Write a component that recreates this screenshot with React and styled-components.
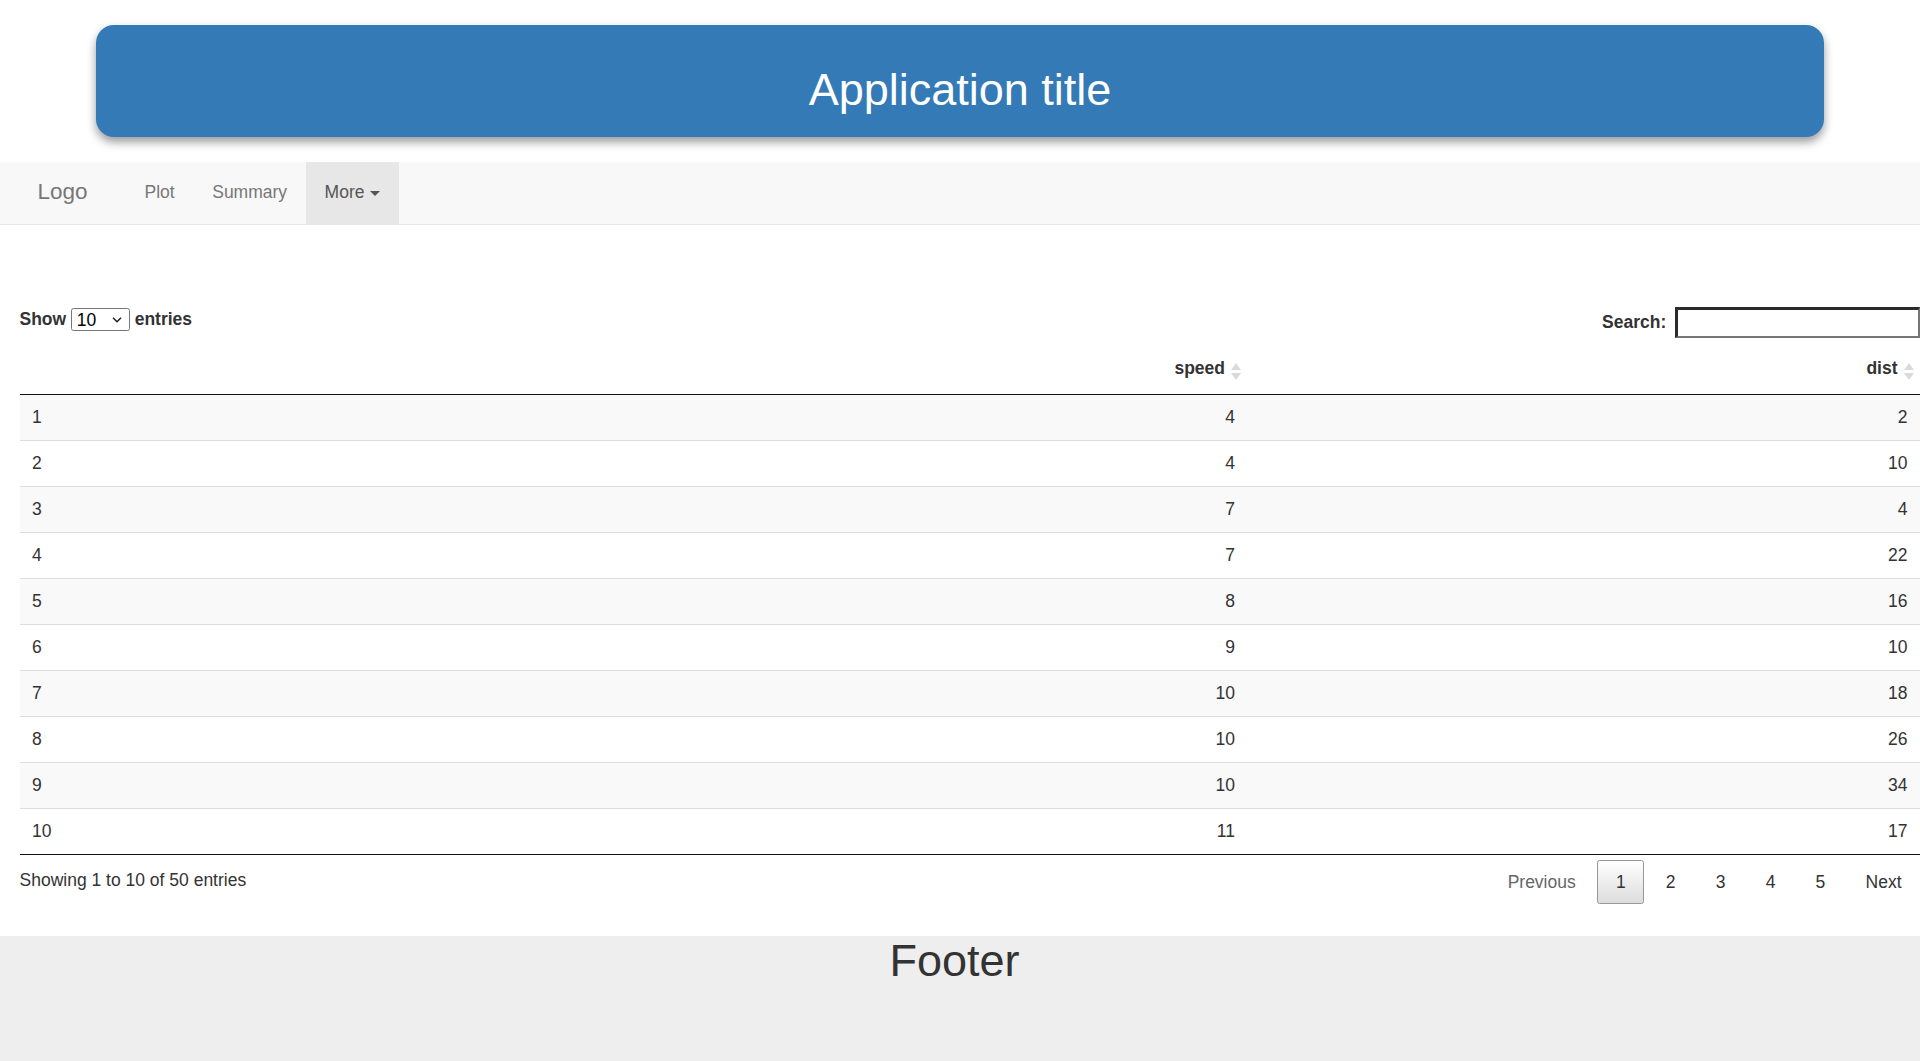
import React from 'react';
import styled, { createGlobalStyle } from 'styled-components';

const GlobalStyle = createGlobalStyle`
  html, body {
    margin: 0;
    padding: 0;
    background: #fff;
    overflow: hidden;
  }
  body {
    font-family: "Liberation Sans", Arial, Helvetica, sans-serif;
    font-size: 17.5px;
    line-height: 25px;
    color: #333;
  }
  * { box-sizing: border-box; }
`;

const FONT = `"Liberation Sans", Arial, Helvetica, sans-serif`;

const Page = styled.div`
  display: flex;
  flex-direction: column;
  min-height: 1061px;
`;

const TitleWrap = styled.header`
  padding: 25px 5% 0;
`;

const TitlePanel = styled.div`
  height: 112px;
  padding-top: 39.5px;
  background: #337ab7;
  border-radius: 18px;
  box-shadow: 0 5px 10px rgba(0, 0, 0, 0.4);
  text-align: center;
`;

const Title = styled.h1`
  margin: 0;
  font-family: ${FONT};
  font-size: 45px;
  line-height: 49.5px;
  font-weight: 400;
  color: #fff;
`;

const Navbar = styled.nav`
  display: flex;
  align-items: stretch;
  height: 63.5px;
  margin-top: 24.6px;
  padding-left: 18.75px;
  background: #f8f8f8;
  border-bottom: 1px solid #e7e7e7;
`;

const Brand = styled.a`
  display: block;
  padding: 17.75px 18.75px 19.75px;
  font-size: 22.5px;
  line-height: 25px;
  color: #777;
  text-decoration: none;
`;

const NavList = styled.ul`
  display: flex;
  margin: 0 0 0 19.5px;
  padding: 0;
  list-style: none;
`;

const NavLink = styled.a`
  display: block;
  padding: 18.75px;
  font-size: 17.5px;
  line-height: 25px;
  color: ${(p) => (p.$active ? '#555' : '#777')};
  background: ${(p) => (p.$active ? '#e7e7e7' : 'transparent')};
  text-decoration: none;
`;

const Caret = styled.span`
  display: inline-block;
  width: 0;
  height: 0;
  margin-left: 6px;
  vertical-align: middle;
  border-top: 5px solid #555;
  border-left: 5px solid transparent;
  border-right: 5px solid transparent;
`;

const Content = styled.main`
  padding: 82px 0 0 19.5px;
`;

const Controls = styled.div`
  display: flex;
  justify-content: space-between;
  align-items: flex-start;
  margin-bottom: 6.3px;
`;

const LengthLabel = styled.label`
  display: flex;
  align-items: center;
  height: 23px;
  margin-top: 1px;
  font-weight: 700;
  line-height: 23px;
`;

const SelectBox = styled.span`
  position: relative;
  display: inline-flex;
  width: 59px;
  height: 23px;
  margin: 0 5px 0 4.5px;
`;

const Select = styled.select`
  appearance: none;
  width: 100%;
  height: 100%;
  padding: 0 0 0 5px;
  border: 1px solid #767676;
  border-radius: 2.5px;
  background: #fff;
  font-family: ${FONT};
  font-size: 17.5px;
  font-weight: 400;
  color: #000;
`;

const Chevron = styled.svg`
  position: absolute;
  right: 8px;
  top: 50%;
  transform: translateY(-50%);
  pointer-events: none;
`;

const SearchLabel = styled.label`
  display: flex;
  align-items: center;
  font-weight: 700;
`;

const SearchInput = styled.input`
  width: 245px;
  height: 30.6px;
  margin-left: 8.75px;
  padding: 0 4px;
  border-style: solid;
  border-width: 3px 2px 2px 3px;
  border-color: #2b2b2b #767676 #767676 #2b2b2b;
  font-family: ${FONT};
  font-size: 17.5px;
  background: #fff;
`;

const Table = styled.table`
  width: 100%;
  table-layout: fixed;
  border-collapse: separate;
  border-spacing: 0;
  border-bottom: 1px solid #111;
`;

const Th = styled.th`
  position: relative;
  width: ${(p) => p.$w}px;
  padding: 12.5px 22.5px 12.5px 12.5px;
  font-weight: 700;
  line-height: 25px;
  text-align: ${(p) => (p.$left ? 'left' : 'right')};
  border-bottom: 1px solid #111;
`;

const SortIcon = styled.svg`
  position: absolute;
  right: 6.5px;
  top: 18.5px;
`;

const Tr = styled.tr`
  background: ${(p) => (p.$odd ? '#f9f9f9' : '#fff')};
  &:first-child td {
    border-top: none;
  }
`;

const Td = styled.td`
  padding: 10px 12.5px;
  line-height: 25px;
  color: #333;
  text-align: ${(p) => (p.$left ? 'left' : 'right')};
  border-top: 1px solid #ddd;
`;

const BottomRow = styled.div`
  display: flex;
  justify-content: space-between;
  align-items: flex-start;
`;

const Info = styled.div`
  padding-top: 13.2px;
  color: #333;
`;

const Pager = styled.div`
  display: flex;
  padding-top: 5px;
`;

const PageButton = styled.a`
  display: inline-block;
  min-width: 26.25px;
  margin-left: 3.2px;
  padding: 8.75px 17.5px;
  line-height: 25px;
  text-align: center;
  border: 1px solid ${(p) => (p.$current ? '#979797' : 'transparent')};
  border-radius: 2.5px;
  background: ${(p) =>
    p.$current ? 'linear-gradient(to bottom, #fff 0%, #dcdcdc 100%)' : 'transparent'};
  color: ${(p) => (p.$disabled ? '#666' : '#333')};
  text-decoration: none;
  cursor: default;
`;

const Footer = styled.footer`
  flex: 1;
  margin-top: 31.2px;
  padding-right: 11px;
  background: #eee;
  text-align: center;
`;

const FooterTitle = styled.h1`
  margin: 0;
  font-family: ${FONT};
  font-size: 45px;
  line-height: 49.5px;
  font-weight: 400;
  color: #333;
`;

const rows = [
  [1, 4, 2],
  [2, 4, 10],
  [3, 7, 4],
  [4, 7, 22],
  [5, 8, 16],
  [6, 9, 10],
  [7, 10, 18],
  [8, 10, 26],
  [9, 10, 34],
  [10, 11, 17],
];

const Sort = () => (
  <SortIcon width="10" height="19" viewBox="0 0 10 19">
    <polygon points="0,8 5,1 10,8" fill="#dadada" />
    <polygon points="0,11 10,11 5,18" fill="#dadada" />
  </SortIcon>
);

export default function App() {
  return (
    <Page>
      <GlobalStyle />
      <TitleWrap>
        <TitlePanel>
          <Title>Application title</Title>
        </TitlePanel>
      </TitleWrap>

      <Navbar>
        <Brand>Logo</Brand>
        <NavList>
          <li><NavLink>Plot</NavLink></li>
          <li><NavLink>Summary</NavLink></li>
          <li>
            <NavLink $active>
              More<Caret />
            </NavLink>
          </li>
        </NavList>
      </Navbar>

      <Content>
        <Controls>
          <LengthLabel>
            Show
            <SelectBox>
              <Select defaultValue="10">
                <option value="10">10</option>
                <option value="25">25</option>
                <option value="50">50</option>
                <option value="100">100</option>
              </Select>
              <Chevron width="10" height="7" viewBox="0 0 10 7">
                <path d="M1 1.2 L5 5.2 L9 1.2" fill="none" stroke="#222" strokeWidth="1.6" />
              </Chevron>
            </SelectBox>
            entries
          </LengthLabel>
          <SearchLabel>
            Search:
            <SearchInput type="search" />
          </SearchLabel>
        </Controls>

        <Table>
          <thead>
            <tr>
              <Th $w={555.5} $left></Th>
              <Th $w={672.5}>speed<Sort /></Th>
              <Th $w={672.5}>dist<Sort /></Th>
            </tr>
          </thead>
          <tbody>
            {rows.map(([n, speed, dist], i) => (
              <Tr key={n} $odd={i % 2 === 0}>
                <Td $left>{n}</Td>
                <Td>{speed}</Td>
                <Td>{dist}</Td>
              </Tr>
            ))}
          </tbody>
        </Table>

        <BottomRow>
          <Info>Showing 1 to 10 of 50 entries</Info>
          <Pager>
            <PageButton $disabled>Previous</PageButton>
            <PageButton $current>1</PageButton>
            <PageButton>2</PageButton>
            <PageButton>3</PageButton>
            <PageButton>4</PageButton>
            <PageButton>5</PageButton>
            <PageButton>Next</PageButton>
          </Pager>
        </BottomRow>
      </Content>

      <Footer>
        <FooterTitle>Footer</FooterTitle>
      </Footer>
    </Page>
  );
}
